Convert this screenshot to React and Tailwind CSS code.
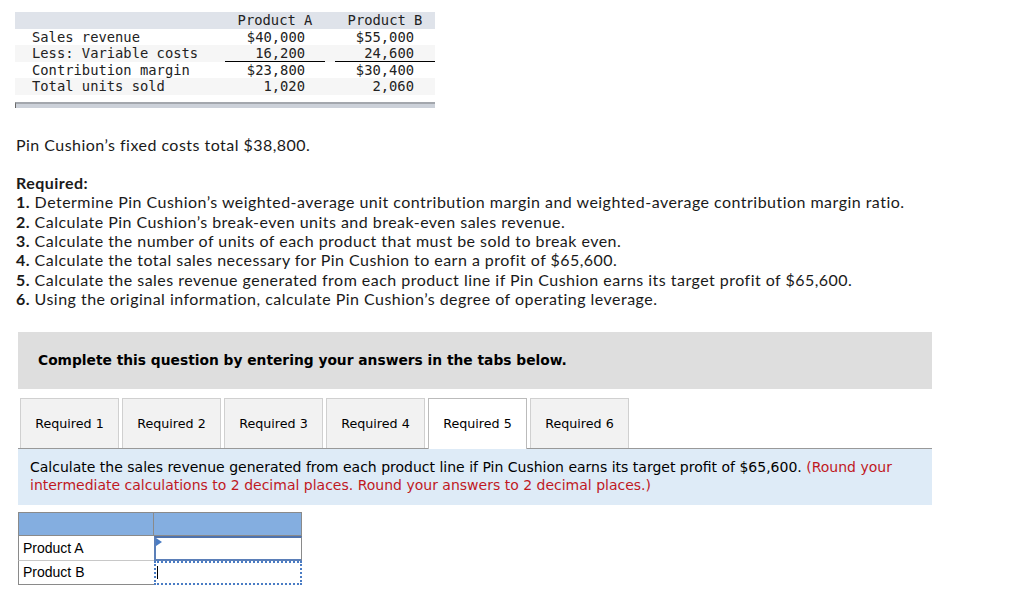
import React from "react";

const mono = { fontFamily: '"DejaVu Sans Mono", monospace' };

const rows = [
  { label: "Sales revenue", a: "$40,000", b: "$55,000", bg: "bg-white" },
  { label: "Less: Variable costs", a: "16,200", b: "24,600", bg: "bg-[#f6f6f6]", line: true },
  { label: "Contribution margin", a: "$23,800", b: "$30,400", bg: "bg-white" },
  { label: "Total units sold", a: "1,020", b: "2,060", bg: "bg-[#f6f6f6]" },
];

const requirements = [
  "Determine Pin Cushion’s weighted-average unit contribution margin and weighted-average contribution margin ratio.",
  "Calculate Pin Cushion’s break-even units and break-even sales revenue.",
  "Calculate the number of units of each product that must be sold to break even.",
  "Calculate the total sales necessary for Pin Cushion to earn a profit of $65,600.",
  "Calculate the sales revenue generated from each product line if Pin Cushion earns its target profit of $65,600.",
  "Using the original information, calculate Pin Cushion’s degree of operating leverage.",
];

const tabs = ["Required 1", "Required 2", "Required 3", "Required 4", "Required 5", "Required 6"];

const App = () => {
  return (
    <div className="w-[1024px] h-[595px] bg-white overflow-hidden text-[#222]">
      {/* Données du problème */}
      <div className="pt-[12px] pl-[15px]">
        <div className="w-[420px] text-[13.8px] leading-[16.5px] text-[#222]" style={mono}>
          <div className="flex h-[16.5px] bg-[#dfe3ea]">
            <div className="w-[210px]"></div>
            <div className="w-[100px] text-center">Product A</div>
            <div className="w-[10px]"></div>
            <div className="w-[100px] text-center">Product B</div>
          </div>
          {rows.map((row, index) => (
            <div key={index} className={`flex h-[16.5px] ${row.bg}`}>
              <div className="w-[210px] pl-[17px] whitespace-pre">{row.label}</div>
              <div className={`w-[100px] text-right pr-[20px] ${row.line ? "border-b border-black" : ""}`}>{row.a}</div>
              <div className="w-[10px]"></div>
              <div className={`w-[100px] text-right pr-[21px] ${row.line ? "border-b border-black" : ""}`}>{row.b}</div>
            </div>
          ))}
          <div className="mt-[7px] h-[6px] bg-[#ccd1d9] border-t-2 border-[#a3a7ad] border-l border-l-[#666]"></div>
        </div>
      </div>

      {/* Énoncé */}
      <div className="pl-[16px] pr-[20px] mt-[27px] text-[16px] leading-[19.3px] tracking-[0.47px] text-[#1a1a1a]" style={{ fontFamily: "Lato, sans-serif" }}>
        <p>Pin Cushion’s fixed costs total $38,800.</p>
        <p className="mt-[19.3px] font-bold">Required:</p>
        {requirements.map((text, index) => (
          <p key={index}>
            <span className="font-bold">{index + 1}.</span> {text}
          </p>
        ))}
      </div>

      <div className="ml-[18px] w-[914px]" style={{ fontFamily: '"DejaVu Sans", Verdana, sans-serif' }}>
        <div className="mt-[24px] h-[57px] bg-[#dedede] flex items-center pl-[20px] text-[13.8px] font-bold text-black">
          Complete this question by entering your answers in the tabs below.
        </div>

        {/* Onglets */}
        <div className="mt-[9px] flex items-end border-b border-[#999] h-[51px]">
          <div className="w-[2px]"></div>
          {tabs.map((tab, index) => (
            <div
              key={index}
              className={`w-[99px] mr-[3px] flex items-center justify-center text-[12.7px] text-black border border-b-0 ${
                index === 4 ? "bg-white border-[#bbb] h-[51px] pb-px -mb-px" : "h-[50px] bg-[#f2f2f2] border-[#d0d0d0]"
              }`}
            >
              {tab}
            </div>
          ))}
        </div>

        <div className="h-[56px] bg-[#deebf7] pl-[12px] pr-[30px] pt-[9px] text-[14px] leading-[18px] text-black">
          <span>Calculate the sales revenue generated from each product line if Pin Cushion earns its target profit of $65,600. </span>
          <span className="text-[#c0191f]">(Round your</span>
          <br />
          <span className="text-[#c0191f]">intermediate calculations to 2 decimal places. Round your answers to 2 decimal places.)</span>
        </div>

        {/* Réponses */}
        <div className="mt-[7px] w-[284px] text-[14px] text-black" style={{ fontFamily: '"Liberation Sans", Arial, sans-serif' }}>
          <div className="flex h-[24px] bg-[#84aee0] border border-[#8a8a8a]">
            <div className="w-[135px] border-r border-[#8a8a8a]"></div>
            <div className="flex-1"></div>
          </div>
          <div className="flex h-[25px]">
            <div className="w-[136px] border-l border-b border-[#8a8a8a] border-b-[#c8c8c8] pl-[4px] flex items-center">Product A</div>
            <div className="relative flex-1 border-2 border-[#5b7fb8] border-t-[#4f73ad] border-r-[#8a8a8a] border-r">
              <div className="absolute left-0 top-0 w-0 h-0 border-t-[4px] border-b-[4px] border-l-[6px] border-t-transparent border-b-transparent border-l-[#4a7cc4]"></div>
            </div>
          </div>
          <div className="flex h-[24px]">
            <div className="w-[136px] border-l border-b border-[#8a8a8a] pl-[4px] flex items-center">Product B</div>
            <div className="relative flex-1 border-2 border-dotted border-[#4a7cc4]">
              <div className="absolute left-[1px] top-[3px] w-[1px] h-[13px] bg-black"></div>
            </div>
          </div>
        </div>
      </div>
    </div>
  );
};

export default App;
